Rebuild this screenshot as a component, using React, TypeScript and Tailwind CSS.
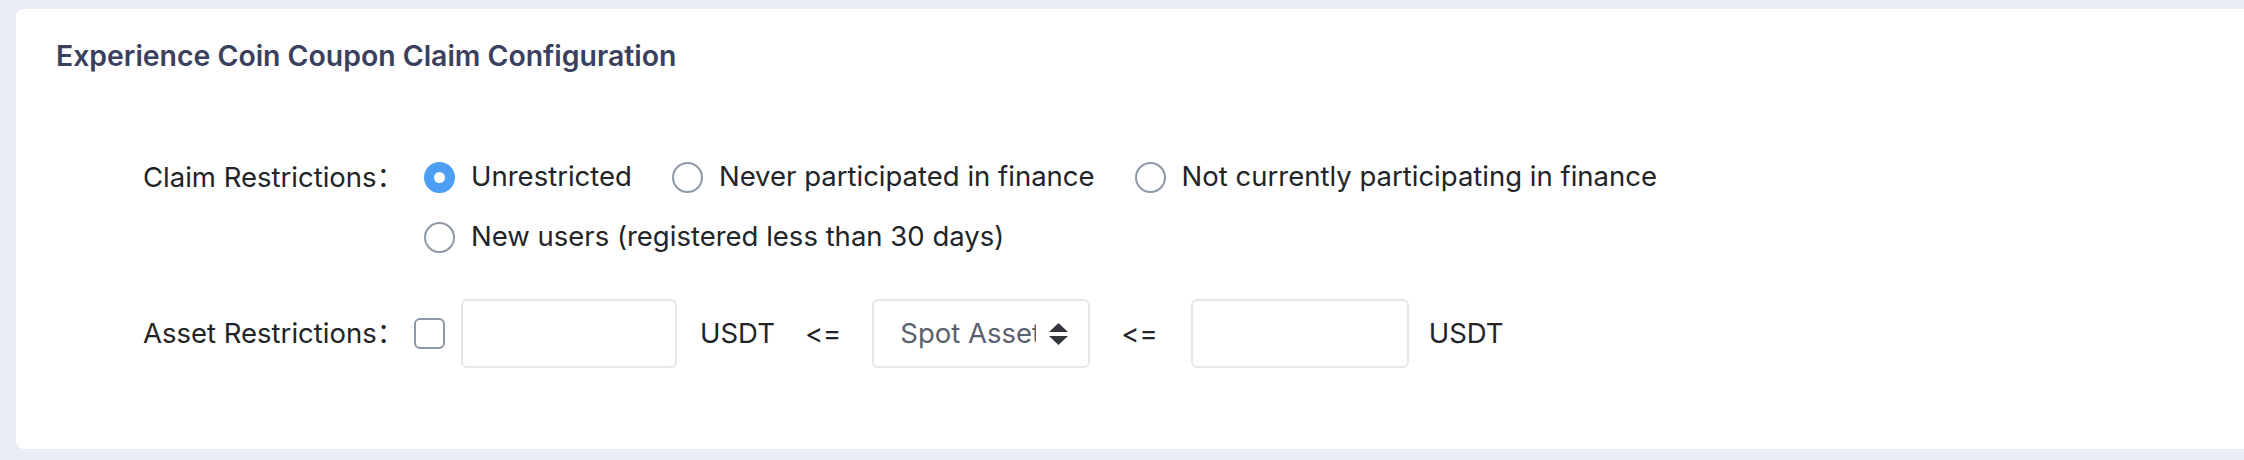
import React, { useState } from "react";

const font = { fontFamily: "Inter, 'Noto Sans CJK SC', sans-serif" };

const claimOptions = [
  "Unrestricted",
  "Never participated in finance",
  "Not currently participating in finance",
  "New users (registered less than 30 days)",
];

const Radio = ({ checked }: { checked: boolean }) =>
  checked ? (
    <span className="flex h-[31px] w-[31px] shrink-0 items-center justify-center rounded-full bg-[#4c9ff4]">
      <span className="h-[11px] w-[11px] rounded-full bg-white" />
    </span>
  ) : (
    <span className="h-[31px] w-[31px] shrink-0 rounded-full border-2 border-[#8f98a6] bg-white" />
  );

const App = () => {
  const [claim, setClaim] = useState(0);

  return (
    <div className="h-[460px] bg-[#e8ecf4] pl-[16px] pt-[9px] pb-[11px]" style={font}>
      <div className="h-full rounded-l-[8px] bg-white">
        {/* Header */}
        <h2 className="pl-[40px] pt-[30px] text-[28.4px] font-semibold leading-[34px] text-[#3a405e]">
          Experience Coin Coupon Claim Configuration
        </h2>

        {/* Form */}
        <div className="mt-[74px] text-[27.5px] text-[#222428]">
          <div className="flex">
            <div className="w-[408px] shrink-0 pl-[127px] leading-[60px]">Claim Restrictions：</div>
            <div className="flex w-[1300px] flex-wrap">
              {claimOptions.map((opt, i) => (
                <label
                  key={opt}
                  onClick={() => setClaim(i)}
                  className="mr-[40px] flex h-[60px] cursor-pointer items-center gap-[16px]"
                >
                  <Radio checked={claim === i} />
                  <span>{opt}</span>
                </label>
              ))}
            </div>
          </div>

          <div className="mt-[32px] flex items-center">
            <div className="w-[398px] shrink-0 pl-[127px]">Asset Restrictions：</div>
            <span className="h-[31px] w-[31px] shrink-0 rounded-[6px] border-2 border-[#8f98a6]" />
            <input className="ml-[16px] h-[69px] w-[216px] rounded-[6px] border-2 border-[#e6e7eb] outline-none" />
            <span className="ml-[23px]">USDT</span>
            <span className="ml-[30px]">&lt;=</span>
            <div className="ml-[31px] flex h-[69px] w-[218px] items-center justify-between rounded-[6px] border-2 border-[#e6e7eb] pl-[26px] pr-[20px]">
              <span className="w-[136px] overflow-hidden whitespace-nowrap text-[#59616e]">Spot Asset</span>
              <svg width="19" height="22" viewBox="0 0 19 22" className="shrink-0">
                <path d="M9.5 0 L19 9 H0 Z" fill="#34373d" />
                <path d="M9.5 22 L19 13 H0 Z" fill="#34373d" />
              </svg>
            </div>
            <span className="ml-[31px]">&lt;=</span>
            <input className="ml-[33px] h-[69px] w-[218px] rounded-[6px] border-2 border-[#e6e7eb] outline-none" />
            <span className="ml-[20px]">USDT</span>
          </div>
        </div>
      </div>
    </div>
  );
};

export default App;
